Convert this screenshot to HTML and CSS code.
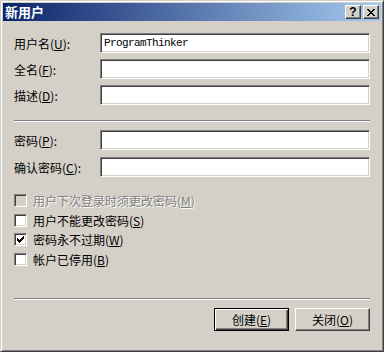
FILE: index.html
```html
<!DOCTYPE html>
<html lang="zh-CN">
<head>
    <meta charset="UTF-8">
    <title>新用户</title>
    <link rel="stylesheet" href="styles.css">
</head>
<body>

<div class="window">
    <div class="titlebar">
        <div class="title">新用户</div>
        <div class="title-buttons">
            <div class="tbtn help">?</div>
            <div class="tbtn close">
                <svg width="8" height="7" viewBox="0 0 8 7" shape-rendering="crispEdges">
                    <path d="M0 0h2v1h-2zM6 0h2v1h-2zM1 1h2v1h-2zM5 1h2v1h-2zM2 2h4v1h-4zM3 3h2v1h-2zM2 4h4v1h-4zM1 5h2v1h-2zM5 5h2v1h-2zM0 6h2v1h-2zM6 6h2v1h-2z" fill="#000"/>
                </svg>
            </div>
        </div>
    </div>

    <div class="content">
        <div class="fields">
            <label class="field-label">用户名(<u>U</u>):</label>
            <div class="textbox">ProgramThinker</div>
            <label class="field-label">全名(<u>F</u>):</label>
            <div class="textbox"></div>
            <label class="field-label">描述(<u>D</u>):</label>
            <div class="textbox"></div>
        </div>

        <div class="separator sep-top"></div>

        <div class="fields fields-pw">
            <label class="field-label">密码(<u>P</u>):</label>
            <div class="textbox"></div>
            <label class="field-label">确认密码(<u>C</u>):</label>
            <div class="textbox"></div>
        </div>

        <div class="checks">
            <div class="check disabled">
                <span class="box"></span>
                <span class="check-text">用户下次登录时须更改密码(<u>M</u>)</span>
            </div>
            <div class="check">
                <span class="box"></span>
                <span class="check-text">用户不能更改密码(<u>S</u>)</span>
            </div>
            <div class="check">
                <span class="box">
                    <svg width="7" height="7" viewBox="0 0 7 7" shape-rendering="crispEdges">
                        <path d="M6 0h1v3h-1zM5 1h1v3h-1zM4 2h1v3h-1zM3 3h1v3h-1zM2 4h1v3h-1zM1 3h1v3h-1zM0 2h1v3h-1z" fill="#000"/>
                    </svg>
                </span>
                <span class="check-text">密码永不过期(<u>W</u>)</span>
            </div>
            <div class="check">
                <span class="box"></span>
                <span class="check-text">帐户已停用(<u>B</u>)</span>
            </div>
        </div>

        <div class="separator sep-bottom"></div>

        <div class="buttons">
            <button class="btn default">创建(<u>E</u>)</button>
            <button class="btn">关闭(<u>O</u>)</button>
        </div>
    </div>
</div>

</body>
</html>
```

FILE: styles.css
```css
body {
    margin: 0;
    padding: 0;
    background-color: #d4d0c8;
    font-family: "Noto Sans CJK SC", "Liberation Sans", sans-serif;
    font-size: 12px;
    color: #000;
}
.window {
    width: 384px;
    height: 352px;
    box-sizing: border-box;
    background-color: #d4d0c8;
    border: 1px solid;
    border-color: #d4d0c8 #404040 #404040 #d4d0c8;
    box-shadow: inset 1px 1px #fff, inset -1px -1px #808080;
    padding: 2px;
    display: flex;
    flex-direction: column;
}
.titlebar {
    height: 18px;
    background: linear-gradient(to right, #0a246a, #a6caf0);
    display: flex;
    align-items: center;
    justify-content: space-between;
}
.title {
    color: #fff;
    font-weight: bold;
    font-size: 13px;
    line-height: 18px;
    padding-left: 2px;
}
.title-buttons {
    display: flex;
    gap: 2px;
    margin-right: 2px;
}
.tbtn {
    width: 16px;
    height: 14px;
    box-sizing: border-box;
    background-color: #d4d0c8;
    border: 1px solid;
    border-color: #fff #404040 #404040 #fff;
    box-shadow: inset -1px -1px #808080;
    display: flex;
    align-items: center;
    justify-content: center;
}
.help {
    font-family: "Liberation Sans", sans-serif;
    font-weight: bold;
    font-size: 12px;
    line-height: 12px;
}
.close svg {
    display: block;
    margin-left: -1px;
}
.content {
    padding: 12px 11px 0 11px;
    display: flex;
    flex-direction: column;
}
.fields {
    display: grid;
    grid-template-columns: 86px 1fr;
    grid-auto-rows: 20px;
    row-gap: 6px;
    align-items: center;
}
.fields-pw {
    row-gap: 7px;
}
.field-label {
    white-space: nowrap;
}
.textbox {
    height: 20px;
    box-sizing: border-box;
    background-color: #fff;
    border: 1px solid;
    border-color: #808080 #fff #fff #808080;
    box-shadow: inset 1px 1px #404040, inset -1px -1px #d4d0c8;
    padding: 0 3px;
    font-family: "Liberation Mono", monospace;
    font-size: 11px;
    letter-spacing: -0.6px;
    line-height: 18px;
}
.separator {
    height: 2px;
    box-sizing: border-box;
    border-top: 1px solid #808080;
    border-bottom: 1px solid #fff;
}
.sep-top {
    margin: 15px 0 8px 0;
}
.checks {
    margin-top: 14px;
}
.check {
    height: 19.5px;
    display: flex;
    align-items: center;
    gap: 6px;
}
.box {
    width: 13px;
    height: 13px;
    box-sizing: border-box;
    background-color: #fff;
    border: 1px solid;
    border-color: #808080 #fff #fff #808080;
    box-shadow: inset 1px 1px #404040, inset -1px -1px #d4d0c8;
    display: flex;
    align-items: center;
    justify-content: center;
}
.check.disabled .box {
    background-color: #d4d0c8;
}
.check.disabled .check-text {
    color: #808080;
    text-shadow: 1px 1px #fff;
}
.sep-bottom {
    margin: 29px 0 8px 0;
}
.buttons {
    display: flex;
    justify-content: flex-end;
    gap: 6px;
}
.btn {
    width: 75px;
    height: 23px;
    box-sizing: border-box;
    padding: 0;
    font-family: "Noto Sans CJK SC", "Liberation Sans", sans-serif;
    font-size: 12px;
    color: #000;
    background-color: #d4d0c8;
    border: 1px solid;
    border-color: #fff #404040 #404040 #fff;
    box-shadow: inset -1px -1px #808080;
}
.btn.default {
    border: 1px solid #000;
    box-shadow: inset 1px 1px #fff, inset -1px -1px #404040, inset -2px -2px #808080;
}
```
